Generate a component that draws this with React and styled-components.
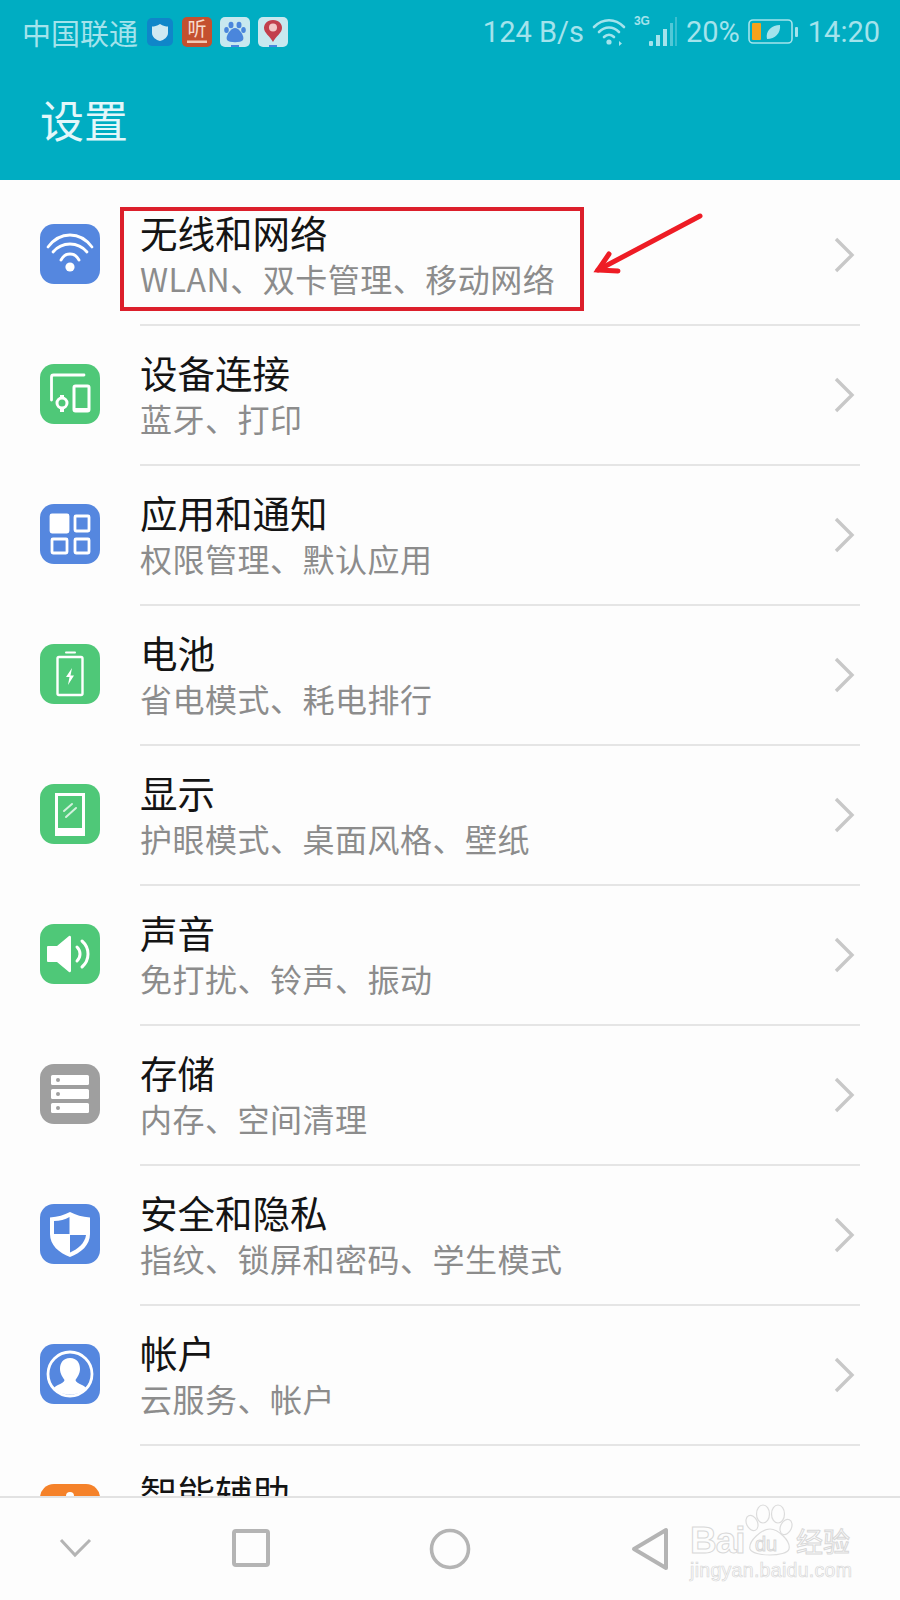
import React from "react";
import styled, { createGlobalStyle } from "styled-components";

const BLUE = "#5587df";
const GREEN = "#4fc878";
const GREY = "#9f9f9f";
const ORANGE = "#f5822a";
const TEAL = "#00adc2";
const PALE = "#a4e3ec";

const WifiGlyph = () => (
  <g fill="none" stroke="#fff" strokeLinecap="round" strokeWidth="2.8">
    <path d="M8 23 C20 7 40 7 52 23" />
    <path d="M13 28 C22 17.300 38 17.300 47 28" />
    <path d="M21 36 C25 28 35 28 39 36" />
    <circle cx="30" cy="43" r="4.600" fill="#fff" stroke="none" />
  </g>
);

const DeviceGlyph = () => (
  <g fill="none" stroke="#fff" strokeWidth="2.800">
    <path d="M11.500 36 V13 a2 2 0 0 1 2-2 H44" strokeLinecap="round" />
    <rect x="34" y="22" width="15" height="25" rx="1.500" strokeWidth="3" />
    <path d="M35 45.500 h13" strokeWidth="3" />
    <circle cx="22" cy="39" r="5" strokeWidth="3" />
    <path d="M22 31 v4 M22 43 v5" strokeWidth="4" />
  </g>
);

const AppsGlyph = () => (
  <g fill="none" stroke="#fff" strokeWidth="2.800">
    <rect x="11" y="11" width="17" height="17" rx="1" fill="#fff" />
    <rect x="35" y="12" width="14" height="15" rx="1" />
    <rect x="12" y="35" width="15" height="14" rx="1" />
    <rect x="35" y="35" width="14" height="14" rx="1" />
  </g>
);

const BatteryGlyph = () => (
  <g>
    <rect x="25" y="7.500" width="11" height="2" rx="1" fill="#fff" />
    <rect x="17.500" y="13" width="25" height="38" rx="1.500" fill="none" stroke="#fff" strokeWidth="2.400" />
    <path d="M32 24 L26 33 H29.500 L28 41 L34 31.500 H30.500z" fill="#fff" />
  </g>
);

const DisplayGlyph = () => (
  <g>
    <path d="M15 9 H45 V52 H15z M18 12 V44 H42 V12z" fill="#fff" fillRule="evenodd" />
    <path d="M24 27 L32 20 M26 33 L36 24" stroke="#fff" strokeWidth="2" strokeLinecap="round" opacity=".75" />
  </g>
);

const SoundGlyph = () => (
  <g>
    <path d="M8 22 H17 L29 12 a1.500 1.500 0 0 1 2 1 V47 a1.500 1.500 0 0 1-2 1 L17 38 H8 a1 1 0 0 1-1-1 V23 a1 1 0 0 1 1-1z" fill="#fff" />
    <path d="M37 23 C41 27 41 33 37 37 M42 17 C50 24 50 36 42 43" fill="none" stroke="#fff" strokeWidth="3" strokeLinecap="round" />
  </g>
);

const StorageGlyph = () => (
  <g>
    {[11, 25, 39].map((y) => (
      <g key={y}>
        <rect x="11" y={y} width="38" height="10" rx="1.500" fill="#fff" />
        <circle cx="18" cy={y + 5} r="2" fill={GREY} />
      </g>
    ))}
  </g>
);

const ShieldGlyph = () => (
  <g>
    <path d="M30 8 C36 11 42 13 50 13.500 V30 C50 41 41 49 30 53 C19 49 10 41 10 30 V13.500 C18 13 24 11 30 8z" fill="#fff" />
    <path d="M29.500 13 V30 H14 V17 C20 17 25 15.500 29.500 13z" fill={BLUE} />
    <path d="M30 31 H46 C45 39 38 45 30 48.500z" fill={BLUE} />
  </g>
);

const AccountGlyph = () => (
  <g>
    <circle cx="30" cy="30" r="22" fill="none" stroke="#fff" strokeWidth="2.800" />
    <path d="M30 14 C37 14 40 19 40 25 C40 30 37 33.500 35.500 36 C35.500 38 38 39 42 41 C45 42.500 46 43.500 46 44 C42 48.500 36.500 50.500 30 50.500 C23.500 50.500 18 48.500 14 44 C14 43.500 15 42.500 18 41 C22 39 24.500 38 24.500 36 C23 33.500 20 30 20 25 C20 19 23 14 30 14z" fill="#fff" />
  </g>
);

const HelperGlyph = () => <circle cx="30" cy="12" r="4" fill="#fff" />;

const items = [
  { title: "无线和网络", sub: "WLAN、双卡管理、移动网络", color: BLUE, Glyph: WifiGlyph },
  { title: "设备连接", sub: "蓝牙、打印", color: GREEN, Glyph: DeviceGlyph },
  { title: "应用和通知", sub: "权限管理、默认应用", color: BLUE, Glyph: AppsGlyph },
  { title: "电池", sub: "省电模式、耗电排行", color: GREEN, Glyph: BatteryGlyph },
  { title: "显示", sub: "护眼模式、桌面风格、壁纸", color: GREEN, Glyph: DisplayGlyph },
  { title: "声音", sub: "免打扰、铃声、振动", color: GREEN, Glyph: SoundGlyph },
  { title: "存储", sub: "内存、空间清理", color: GREY, Glyph: StorageGlyph },
  { title: "安全和隐私", sub: "指纹、锁屏和密码、学生模式", color: BLUE, Glyph: ShieldGlyph },
  { title: "帐户", sub: "云服务、帐户", color: BLUE, Glyph: AccountGlyph },
  { title: "智能辅助", sub: "无障碍、手势控制", color: ORANGE, Glyph: HelperGlyph },
];

export default function App() {
  return (
    <Phone lang="zh-CN">
      <GlobalStyle />
      <Header>
        <StatusBar>
          <StatusGroup>
            <Carrier>中国联通</Carrier>
            <NotifyIcons>
              <svg width="28" height="30" viewBox="0 0 28 30">
                <rect x="1" y="1" width="26" height="28" rx="5" fill="#0f86c9" />
                <path d="M14 7 C17 9 20 9.500 22 9.500 V16 C22 20 18 23 14 24 C10 23 6 20 6 16 V9.500 C8 9.500 11 9 14 7z" fill="#cfe9f2" />
              </svg>
              <Tile $bg="#c4502f">
                <svg width="30" height="30" viewBox="0 0 30 30">
                  <text x="15" y="19" textAnchor="middle" fontSize="19" fill="#f5dccf" fontFamily="'Noto Sans CJK SC', sans-serif">听</text>
                  <rect x="5" y="23.500" width="20" height="2.500" fill="#f2c9b5" />
                </svg>
              </Tile>
              <Tile $bg="#c8e8ef">
                <svg width="30" height="30" viewBox="0 0 30 30" fill="#4a86dc">
                  <ellipse cx="11" cy="8" rx="2.500" ry="3.200" />
                  <ellipse cx="19" cy="8" rx="2.500" ry="3.200" />
                  <ellipse cx="6.500" cy="13" rx="2.300" ry="3" />
                  <ellipse cx="23.500" cy="13" rx="2.300" ry="3" />
                  <path d="M15 11 C19 11 25 19 23 23 C21 26 9 26 7 23 C5 19 11 11 15 11z" />
                  <rect x="11" y="28" width="8" height="2" />
                </svg>
              </Tile>
              <Tile $bg="#c8e8ef">
                <svg width="30" height="30" viewBox="0 0 30 30">
                  <path d="M15 3 C21 3 24 7 24 11 C24 16 18 19 15 25 C12 19 6 16 6 11 C6 7 9 3 15 3z" fill="#c23f4c" />
                  <circle cx="15" cy="10.500" r="4" fill="#f3c7c7" />
                  <rect x="11" y="28" width="8" height="2" fill="#4a86dc" />
                </svg>
              </Tile>
            </NotifyIcons>
          </StatusGroup>
          <StatusGroup>
            <StatusText>124 B/s</StatusText>
            <svg width="34" height="30" viewBox="0 0 34 30" fill="none" stroke={PALE} strokeLinecap="round">
              <path d="M2 10 C11 1 23 1 32 10" strokeWidth="2.600" />
              <path d="M7 15 C13 9 21 9 27 15" strokeWidth="2.600" />
              <path d="M12 20 C15 17 19 17 22 20" strokeWidth="2.600" />
              <circle cx="17" cy="25" r="2.600" fill={PALE} stroke="none" />
              <path d="M27 24 l3 2.500 -3 2.500z" fill={PALE} stroke="none" />
            </svg>
            <SignalWrap>
              <ThreeG>3G</ThreeG>
              <svg width="30" height="30" viewBox="0 0 30 30" fill={PALE}>
                <rect x="1" y="24" width="4" height="5" rx="1" />
                <rect x="8" y="18" width="4" height="11" />
                <rect x="15" y="12" width="4" height="17" />
                <rect x="22" y="6" width="3" height="23" opacity=".5" />
                <rect x="27" y="0" width="2" height="29" opacity=".35" />
              </svg>
            </SignalWrap>
            <StatusText>20%</StatusText>
            <svg width="52" height="26" viewBox="0 0 52 26">
              <rect x="1" y="1" width="43" height="23" rx="4" fill="none" stroke={PALE} strokeWidth="1.600" />
              <rect x="4" y="4" width="9" height="17" rx="1" fill="#f5a21c" />
              <path d="M19 20 C17 12 24 6 32 6 C33 14 27 20 19 20z" fill={PALE} />
              <rect x="47" y="8" width="3" height="10" rx="1" fill={PALE} />
            </svg>
            <StatusText>14:20</StatusText>
          </StatusGroup>
        </StatusBar>
        <PageTitle>设置</PageTitle>
      </Header>

      <List>
        {items.map(({ title, sub, color, Glyph }) => (
          <Row key={title}>
            <IconTile $color={color}>
              <svg width="60" height="60" viewBox="0 0 60 60">
                <Glyph />
              </svg>
            </IconTile>
            <RowBody>
              <RowText>
                <RowTitle>{title}</RowTitle>
                <RowSub>{sub}</RowSub>
              </RowText>
              <svg width="24" height="36" viewBox="0 0 24 36" fill="none" stroke="#c8c8c8" strokeWidth="3.400">
                <path d="M4 2 L20 18 L4 34" />
              </svg>
            </RowBody>
          </Row>
        ))}
      </List>

      <NavBar>
        <svg width="40" height="40" viewBox="0 0 40 40" fill="none" stroke="#b4b4b4" strokeWidth="3">
          <path d="M6 11 L20 26 L35 11" />
        </svg>
        <svg width="40" height="40" viewBox="0 0 40 40" fill="none" stroke="#b4b4b4" strokeWidth="4">
          <rect x="4" y="2" width="34" height="34" rx="2" />
        </svg>
        <svg width="44" height="44" viewBox="0 0 44 44" fill="none" stroke="#b4b4b4" strokeWidth="3.600">
          <circle cx="22" cy="22" r="18.500" />
        </svg>
        <svg width="40" height="44" viewBox="0 0 40 44" fill="none" stroke="#b4b4b4" strokeWidth="4" strokeLinejoin="round">
          <path d="M36 3 V41 L4 22z" />
        </svg>
      </NavBar>

      <HighlightBox />
      <ArrowMark width="120" height="70" viewBox="0 0 120 70" fill="none" stroke="#ee1c25" strokeWidth="5" strokeLinecap="round">
        <path d="M110 6 L8 60" />
        <path d="M19 44 L8 60 L28 61" />
      </ArrowMark>

      <Watermark>
        <PawMark width="52" height="56" viewBox="0 0 52 56" fill="#fdfdfd" stroke="#dcdcdc" strokeWidth="1.200">
          <ellipse cx="18" cy="11" rx="6.500" ry="9" />
          <ellipse cx="33" cy="11" rx="6.500" ry="9" />
          <ellipse cx="7" cy="20" rx="5.500" ry="8" transform="rotate(-25 7 20)" />
          <ellipse cx="41" cy="24" rx="5.500" ry="8" transform="rotate(25 41 24)" />
          <path d="M25 26 C33 26 46 38 44 46 C42 54 8 54 5 46 C3 38 17 26 25 26z" />
        </PawMark>
        <BrandLatin>Bai</BrandLatin>
        <BrandDu>du</BrandDu>
        <BrandCjk>经验</BrandCjk>
        <BrandUrl>jingyan.baidu.com</BrandUrl>
      </Watermark>
    </Phone>
  );
}

const GlobalStyle = createGlobalStyle`
  html, body {
    margin: 0;
    padding: 0;
    background: #fdfdfd;
  }
`;

const Phone = styled.div`
  position: relative;
  width: 900px;
  height: 1600px;
  display: flex;
  flex-direction: column;
  overflow: hidden;
  background: #fdfdfd;
  font-family: "Noto Sans CJK SC", Roboto, sans-serif;
`;

const Header = styled.div`
  height: 180px;
  flex-shrink: 0;
  background: ${TEAL};
`;

const StatusBar = styled.div`
  height: 64px;
  padding: 0 20px 0 22px;
  display: flex;
  align-items: center;
  justify-content: space-between;
`;

const StatusGroup = styled.div`
  display: flex;
  align-items: center;
  gap: 8px;
`;

const Carrier = styled.span`
  font-size: 29px;
  color: ${PALE};
`;

const NotifyIcons = styled.div`
  display: flex;
  align-items: center;
  gap: 8px;
`;

const Tile = styled.div`
  width: 30px;
  height: 30px;
  border-radius: 5px;
  overflow: hidden;
  background: ${(props) => props.$bg};
`;

const StatusText = styled.span`
  font-family: Roboto, sans-serif;
  font-size: 29px;
  color: ${PALE};
`;

const SignalWrap = styled.div`
  position: relative;
  width: 44px;
  display: flex;
  justify-content: flex-end;
`;

const ThreeG = styled.span`
  position: absolute;
  left: 0;
  top: -3px;
  font-family: "Liberation Sans", sans-serif;
  font-size: 12px;
  font-weight: 700;
  color: ${PALE};
`;

const PageTitle = styled.div`
  padding-left: 40px;
  font-size: 44px;
  line-height: 110px;
  height: 116px;
  color: #e3f7fa;
`;

const List = styled.div`
  flex: 1;
  min-height: 0;
  padding-top: 6px;
  overflow: hidden;
`;

const Row = styled.div`
  height: 140px;
  display: flex;
  align-items: flex-start;
  padding: 0 40px;
  gap: 40px;
`;

const IconTile = styled.div`
  width: 60px;
  height: 60px;
  flex-shrink: 0;
  margin-top: 38px;
  border-radius: 14px;
  background: ${(props) => props.$color};
`;

const RowBody = styled.div`
  flex: 1;
  height: 100%;
  box-sizing: border-box;
  display: flex;
  align-items: center;
  justify-content: space-between;
  padding-right: 4px;
  border-bottom: 2px solid #e5e5e5;
`;

const RowText = styled.div`
  height: 100%;
  box-sizing: border-box;
  padding-top: 22px;
`;

const RowTitle = styled.div`
  font-size: 37.500px;
  line-height: 47px;
  color: #141414;
`;

const RowSub = styled.div`
  font-size: 32px;
  line-height: 47px;
  letter-spacing: 0.500px;
  color: #8c8c8c;
`;

const NavBar = styled.div`
  height: 104px;
  box-sizing: border-box;
  flex-shrink: 0;
  display: grid;
  grid-template-columns: 150px 200px 200px 200px;
  align-items: center;
  justify-items: center;
  border-top: 2px solid #e2e2e2;
  background: #fdfdfd;
  position: relative;
`;

const HighlightBox = styled.div`
  position: absolute;
  left: 120px;
  top: 207px;
  width: 464px;
  height: 104px;
  box-sizing: border-box;
  border: 4px solid #dc1f2b;
`;

const ArrowMark = styled.svg`
  position: absolute;
  left: 590px;
  top: 210px;
`;

const Watermark = styled.div`
  position: absolute;
  left: 690px;
  top: 1503px;
  width: 165px;
  height: 80px;
  color: transparent;
  -webkit-text-stroke: 1px #d8d8d8;
`;

const PawMark = styled.svg`
  position: absolute;
  left: 55px;
  top: 0;
`;

const BrandLatin = styled.span`
  position: absolute;
  left: 0;
  top: 16px;
  font-family: "Liberation Sans", sans-serif;
  font-size: 37px;
  font-weight: 700;
  line-height: 44px;
  letter-spacing: -1px;
`;

const BrandDu = styled.span`
  position: absolute;
  left: 65px;
  top: 26px;
  font-family: "Liberation Sans", sans-serif;
  font-size: 20px;
  line-height: 30px;
`;

const BrandCjk = styled.span`
  position: absolute;
  left: 106px;
  top: 16px;
  font-size: 27px;
  line-height: 44px;
`;

const BrandUrl = styled.div`
  position: absolute;
  left: 0;
  top: 56px;
  font-family: "Liberation Sans", sans-serif;
  font-size: 19.500px;
  line-height: 22px;
  letter-spacing: 0.300px;
  -webkit-text-stroke: 0.700px #d8d8d8;
`;
